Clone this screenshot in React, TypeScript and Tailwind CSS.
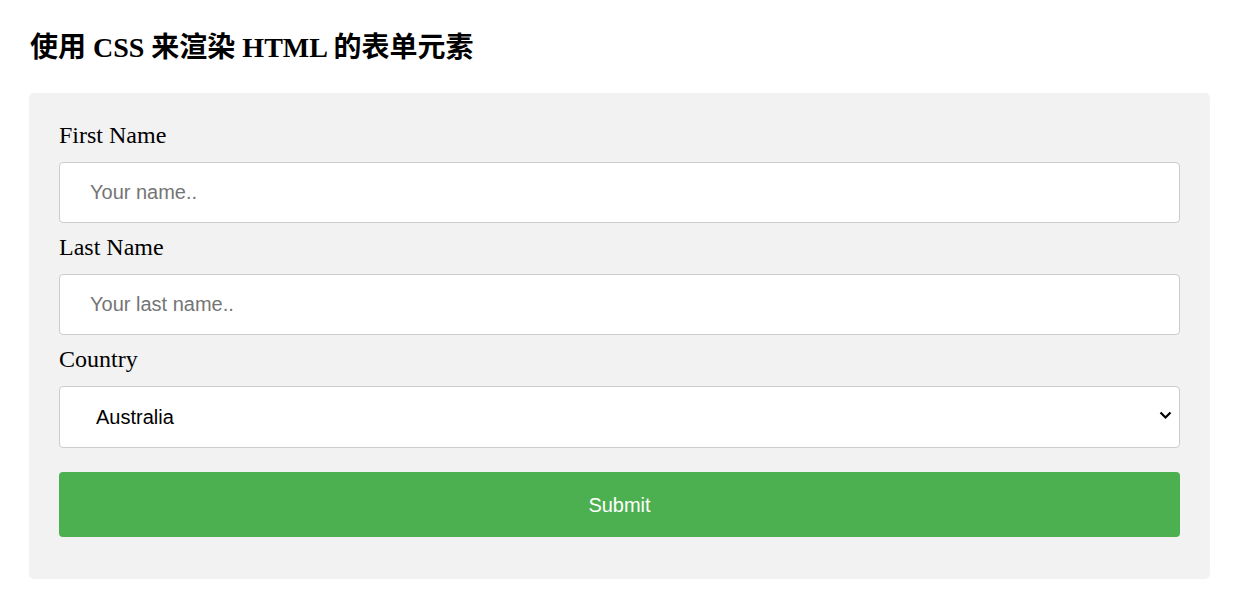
import { useState } from "react";

const serif = "font-['Liberation_Serif','Noto_Sans_CJK_SC',serif]";
const sans = "font-['Liberation_Sans',Arial,sans-serif]";

export default function App() {
  const [country, setCountry] = useState("australia");

  return (
    <div className={`min-h-[615px] bg-white pl-[29px] pr-[24px] pt-[32px] text-black ${serif}`}>
      <h3 className="h-[32px] pl-px text-[28px] font-bold leading-[32px]">使用 CSS 来渲染 HTML 的表单元素</h3>

      <form className="mt-[29px] rounded-[5px] bg-[#f2f2f2] px-[30px] pt-[30px] pb-[42px]">
        <label className="block h-[25px] text-[24px] leading-[25px]">First Name</label>
        <input
          type="text"
          placeholder="Your name.."
          className={`mt-[14px] block h-[61px] w-full rounded-[4px] border border-[#ccc] bg-white px-[30px] text-[20px] text-black outline-none placeholder:text-[#757575] ${sans}`}
        />

        <label className="mt-[12px] block h-[25px] text-[24px] leading-[25px]">Last Name</label>
        <input
          type="text"
          placeholder="Your last name.."
          className={`mt-[14px] block h-[61px] w-full rounded-[4px] border border-[#ccc] bg-white px-[30px] text-[20px] text-black outline-none placeholder:text-[#757575] ${sans}`}
        />

        <label className="mt-[12px] block h-[25px] text-[24px] leading-[25px]">Country</label>
        <div className="relative mt-[14px]">
          <select
            value={country}
            onChange={(e) => setCountry(e.target.value)}
            className={`block h-[62px] w-full appearance-none rounded-[4px] border border-[#ccc] bg-white pl-[36px] text-[20px] text-black outline-none ${sans}`}
          >
            <option value="australia">Australia</option>
            <option value="canada">Canada</option>
            <option value="usa">USA</option>
          </select>
          <svg
            className="pointer-events-none absolute right-[8px] top-[25px]"
            width="13"
            height="9"
            viewBox="0 0 13 9"
            fill="none"
          >
            <path d="M1.5 1.5 L6.5 6.5 L11.5 1.5" stroke="#000" strokeWidth="2.2" />
          </svg>
        </div>

        <button
          type="button"
          className={`mt-[24px] block h-[65px] w-full rounded-[4px] bg-[#4caf50] text-[20px] text-white ${sans}`}
        >
          Submit
        </button>
      </form>
    </div>
  );
}
